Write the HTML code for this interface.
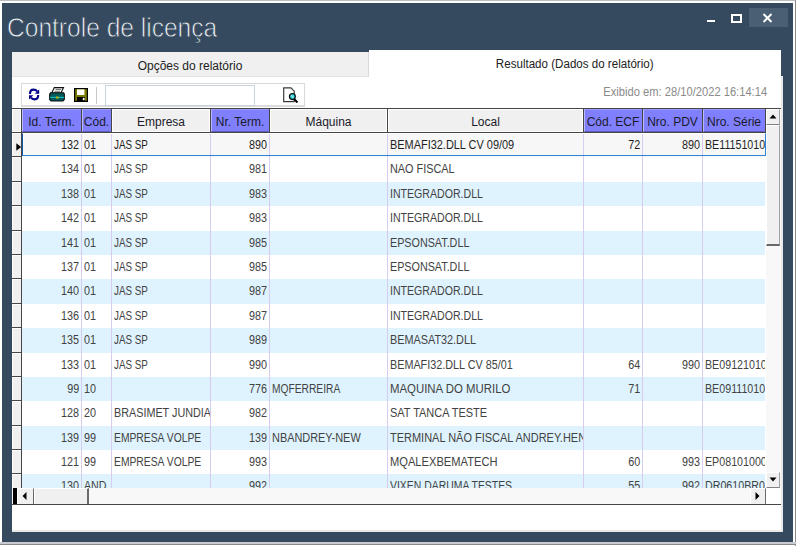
<!DOCTYPE html>
<html><head><meta charset="utf-8"><style>
*{box-sizing:border-box;margin:0;padding:0}
html,body{width:796px;height:546px;overflow:hidden;background:#fff;font-family:"Liberation Sans",sans-serif}
.a{position:absolute}
.win{left:2px;top:3px;width:791px;height:539px;background:#354a5e}
.title{left:6.6px;top:12px;font-size:28px;color:#eef1f4;-webkit-text-stroke:0.8px #354a5e;white-space:nowrap;transform:scaleX(.877);transform-origin:0 0}
.t1{left:12px;top:52px;width:357px;height:25px;background:#f0f0f0;border-right:1px solid #d9d9d9;border-bottom:1px solid #e3e3e3;font-size:12px;color:#222;text-align:center;line-height:28px}
.t2{left:369px;top:50px;width:412px;height:27px;background:#fff;font-size:12px;color:#222;text-align:center;line-height:28px}
.t2 span{display:inline-block;transform:scaleX(.965)}
.sheet{left:12px;top:76px;width:771px;height:456px;background:#fff;border-right:2px solid #e9e9e9;border-bottom:2px solid #e9e9e9}
.tb{left:21px;top:83px;width:284px;height:24px;border:1px solid #dadada;border-bottom:2px solid #dcdcdc;background:#fff}
.edit{left:105px;top:85px;width:150px;height:21px;border:1px solid #c9d1da;background:#fff}
.sep{left:96px;top:87px;width:1px;height:17px;background:#c8c8c8}
.exib{left:560px;top:85px;width:207px;text-align:right;font-size:12px;color:#8a8a8a;white-space:nowrap}
.exib span{display:inline-block;transform:scaleX(.93);transform-origin:100% 0}
.hl{background:#464646}
.hc{top:109px;height:23px;font-size:12px;color:#1a1a2a;text-align:center;line-height:25px;white-space:nowrap;overflow:hidden;border:1px solid #fff;border-right-color:#fff}
.hp{background:#8080ff;border-color:#9a9aff #8080ff #5c5cb8 #b8b8ff}
.hg{background:#f0f0f0}
.c{position:absolute;top:0;height:100%;font-size:12px;white-space:nowrap;overflow:hidden}
.c span{position:absolute;top:0}
.c.r span{transform-origin:100% 50%}
.c.l span{transform-origin:0 50%}
.vl{background:#d6ccf0;width:1px}
.btn{background:#f0f0f0;border-top:1px solid #fff;border-left:1px solid #fff;border-right:1px solid #a0a0a0;border-bottom:1px solid #808080}
</style></head><body>

<div class="a" style="left:0;top:0;width:796px;height:1px;background:#b9bdc2"></div>
<div class="a" style="left:795px;top:0;width:1px;height:546px;background:#8a8a8a"></div>
<div class="a" style="left:0;top:542px;width:796px;height:2px;background:#c9cdd1"></div>
<div class="a" style="left:0;top:544px;width:796px;height:1px;background:#8a8a8a"></div>
<div class="a win"></div>
<div class="a" style="left:749px;top:8px;width:39px;height:19px;background:#4b5f74"></div>
<div class="a" style="left:707px;top:20px;width:8px;height:2px;background:#fff"></div>
<div class="a" style="left:731px;top:14px;width:11px;height:9px;border:2px solid #fff"></div>
<svg class="a" style="left:762px;top:13px" width="11" height="10" viewBox="0 0 11 10"><path d="M1.5 1 L9.5 9 M9.5 1 L1.5 9" stroke="#fff" stroke-width="1.9" fill="none"/></svg>
<div class="a title">Controle de licença</div>
<div class="a sheet"></div>
<div class="a t1">Opções do relatório</div>
<div class="a t2"><span>Resultado (Dados do relatório)</span></div>
<div class="a tb"></div>
<div class="a sep"></div>
<div class="a edit"></div>
<svg class="a" style="left:28px;top:88px" width="12" height="13" viewBox="0 0 12 13">
<path d="M2 5.9 C2 3 3 1.6 5.6 1.6 C7.4 1.6 8.4 2.2 9.2 3.3" stroke="#000088" stroke-width="2.1" fill="none"/>
<path d="M6.8 5.8 L11.2 5.8 L11.2 1.4 Z" fill="#000088"/>
<path d="M10.2 7.1 C10.2 10 9.2 11.4 6.6 11.4 C4.8 11.4 3.8 10.8 3 9.7" stroke="#000088" stroke-width="2.1" fill="none"/>
<path d="M5.4 7.2 L1 7.2 L1 11.6 Z" fill="#000088"/>
</svg>
<svg class="a" style="left:49px;top:87px" width="16" height="15" viewBox="0 0 16 15">
<path d="M5.3 0.6 L14.5 0.6 L11.8 6.2 L2.6 6.2 Z" fill="#fff" stroke="#111" stroke-width="1.1"/>
<path d="M6.5 2.4 L12 2.4 M5.5 4.2 L11 4.2" stroke="#777" stroke-width="1.1"/>
<path d="M1.6 5.8 L14.6 5.8 L15.3 7 L15.3 12.6 L14 14 L2 14 L0.7 12.6 L0.7 7 Z" fill="#005a5a" stroke="#0a0a0a" stroke-width="1.1"/>
<path d="M1.2 10.4 L15 10.4" stroke="#19c0c0" stroke-width="1.1"/>
<rect x="7" y="9.5" width="2.6" height="2" fill="#c8b400"/>
</svg>
<svg class="a" style="left:74px;top:88px" width="14" height="14" viewBox="0 0 14 14">
<rect x="0.6" y="0.6" width="12.8" height="12.8" fill="#7a7a00" stroke="#000" stroke-width="1.2"/>
<rect x="3" y="1.4" width="7.4" height="5.6" fill="#fff"/>
<rect x="3" y="9" width="8" height="4" fill="#000"/>
<rect x="8.8" y="9.8" width="1.8" height="2.4" fill="#fff"/>
</svg>
<svg class="a" style="left:283px;top:87px" width="16" height="16" viewBox="0 0 16 16">
<path d="M0.7 0.9 L8 0.9 L11.2 4.2 L11.2 14.7 L0.7 14.7 Z" fill="#fff" stroke="#3a3a3a" stroke-width="1.2"/>
<circle cx="9.4" cy="9.6" r="2.9" fill="#22e6ee" stroke="#111" stroke-width="1.3"/>
<path d="M8.2 8 L10.2 10.8" stroke="#f0d0d0" stroke-width="0.9"/>
<path d="M11.3 12.3 L14.5 15.5" stroke="#000" stroke-width="2"/>
</svg>
<div class="a exib"><span>Exibido em: 28/10/2022 16:14:14</span></div>
<div class="a hl" style="left:12px;top:108px;width:769px;height:1px"></div>
<div class="a hc hg" style="left:12px;width:9px"></div>
<div class="a hc hp" style="left:22px;width:59px">Id. Term.</div>
<div class="a hc hp" style="left:82px;width:29px">Cód.</div>
<div class="a hc hg" style="left:112px;width:98px">Empresa</div>
<div class="a hc hp" style="left:211px;width:58px">Nr. Term.</div>
<div class="a hc hg" style="left:270px;width:117px">Máquina</div>
<div class="a hc hg" style="left:388px;width:195px">Local</div>
<div class="a hc hp" style="left:584px;width:58px">Cód. ECF</div>
<div class="a hc hp" style="left:643px;width:59px">Nro. PDV</div>
<div class="a hc hp" style="left:703px;width:62px">Nro. Série</div>
<div class="a hl" style="left:21px;top:108px;width:1px;height:25px"></div>
<div class="a hl" style="left:81px;top:108px;width:1px;height:25px"></div>
<div class="a hl" style="left:111px;top:108px;width:1px;height:25px"></div>
<div class="a hl" style="left:210px;top:108px;width:1px;height:25px"></div>
<div class="a hl" style="left:269px;top:108px;width:1px;height:25px"></div>
<div class="a hl" style="left:387px;top:108px;width:1px;height:25px"></div>
<div class="a hl" style="left:583px;top:108px;width:1px;height:25px"></div>
<div class="a hl" style="left:642px;top:108px;width:1px;height:25px"></div>
<div class="a hl" style="left:702px;top:108px;width:1px;height:25px"></div>
<div class="a hl" style="left:765px;top:108px;width:1px;height:25px"></div>
<div class="a hl" style="left:12px;top:132px;width:754px;height:1px"></div>
<div class="a" style="left:12px;top:133px;width:754px;height:355px;overflow:hidden">
<div class="a" style="left:0;top:0px;width:9px;height:23px;background:#f0f0f0;border-top:1px solid #fff;border-left:1px solid #fff"></div>
<div class="a hl" style="left:0;top:23px;width:10px;height:1px"></div>
<div class="a" style="left:10px;top:0px;width:743px;height:24px;background:#f7f7f7">
<div class="c r" style="left:0px;width:59px;line-height:24px;color:#1e1e1e"><span style="right:1.6px;transform:scaleX(0.9)">132</span></div>
<div class="c l" style="left:60px;width:29px;line-height:24px;color:#1e1e1e"><span style="left:1.6px;transform:scaleX(0.9)">01</span></div>
<div class="c l" style="left:90px;width:98px;line-height:24px;color:#1e1e1e"><span style="left:1.6px;transform:scaleX(0.82)">JAS SP</span></div>
<div class="c r" style="left:189px;width:58px;line-height:24px;color:#1e1e1e"><span style="right:1.6px;transform:scaleX(0.9)">890</span></div>
<div class="c l" style="left:366px;width:195px;line-height:24px;color:#1e1e1e"><span style="left:1.6px;transform:scaleX(0.911)">BEMAFI32.DLL CV 09/09</span></div>
<div class="c r" style="left:562px;width:58px;line-height:24px;color:#1e1e1e"><span style="right:1.6px;transform:scaleX(0.9)">72</span></div>
<div class="c r" style="left:621px;width:59px;line-height:24px;color:#1e1e1e"><span style="right:1.6px;transform:scaleX(0.9)">890</span></div>
<div class="c l" style="left:681px;width:62px;line-height:24px;color:#1e1e1e"><span style="left:1.6px;transform:scaleX(0.89)">BE11151010</span></div>
<div class="a vl" style="left:59px;top:0;height:24px"></div>
<div class="a vl" style="left:89px;top:0;height:24px"></div>
<div class="a vl" style="left:188px;top:0;height:24px"></div>
<div class="a vl" style="left:247px;top:0;height:24px"></div>
<div class="a vl" style="left:365px;top:0;height:24px"></div>
<div class="a vl" style="left:561px;top:0;height:24px"></div>
<div class="a vl" style="left:620px;top:0;height:24px"></div>
<div class="a vl" style="left:680px;top:0;height:24px"></div>
</div>
<div class="a" style="left:0;top:24px;width:9px;height:24px;background:#f0f0f0;border-top:1px solid #fff;border-left:1px solid #fff"></div>
<div class="a hl" style="left:0;top:48px;width:10px;height:1px"></div>
<div class="a" style="left:10px;top:24px;width:743px;height:25px;background:#ffffff">
<div class="c r" style="left:0px;width:59px;line-height:25px;color:#424242"><span style="right:1.6px;transform:scaleX(0.9)">134</span></div>
<div class="c l" style="left:60px;width:29px;line-height:25px;color:#424242"><span style="left:1.6px;transform:scaleX(0.9)">01</span></div>
<div class="c l" style="left:90px;width:98px;line-height:25px;color:#424242"><span style="left:1.6px;transform:scaleX(0.82)">JAS SP</span></div>
<div class="c r" style="left:189px;width:58px;line-height:25px;color:#424242"><span style="right:1.6px;transform:scaleX(0.9)">981</span></div>
<div class="c l" style="left:366px;width:195px;line-height:25px;color:#424242"><span style="left:1.6px;transform:scaleX(0.906)">NAO FISCAL</span></div>
<div class="a vl" style="left:59px;top:0;height:25px"></div>
<div class="a vl" style="left:89px;top:0;height:25px"></div>
<div class="a vl" style="left:188px;top:0;height:25px"></div>
<div class="a vl" style="left:247px;top:0;height:25px"></div>
<div class="a vl" style="left:365px;top:0;height:25px"></div>
<div class="a vl" style="left:561px;top:0;height:25px"></div>
<div class="a vl" style="left:620px;top:0;height:25px"></div>
<div class="a vl" style="left:680px;top:0;height:25px"></div>
</div>
<div class="a" style="left:0;top:49px;width:9px;height:23px;background:#f0f0f0;border-top:1px solid #fff;border-left:1px solid #fff"></div>
<div class="a hl" style="left:0;top:72px;width:10px;height:1px"></div>
<div class="a" style="left:10px;top:49px;width:743px;height:24px;background:#dff3fe">
<div class="c r" style="left:0px;width:59px;line-height:24px;color:#424242"><span style="right:1.6px;transform:scaleX(0.9)">138</span></div>
<div class="c l" style="left:60px;width:29px;line-height:24px;color:#424242"><span style="left:1.6px;transform:scaleX(0.9)">01</span></div>
<div class="c l" style="left:90px;width:98px;line-height:24px;color:#424242"><span style="left:1.6px;transform:scaleX(0.82)">JAS SP</span></div>
<div class="c r" style="left:189px;width:58px;line-height:24px;color:#424242"><span style="right:1.6px;transform:scaleX(0.9)">983</span></div>
<div class="c l" style="left:366px;width:195px;line-height:24px;color:#424242"><span style="left:1.6px;transform:scaleX(0.882)">INTEGRADOR.DLL</span></div>
<div class="a vl" style="left:59px;top:0;height:24px"></div>
<div class="a vl" style="left:89px;top:0;height:24px"></div>
<div class="a vl" style="left:188px;top:0;height:24px"></div>
<div class="a vl" style="left:247px;top:0;height:24px"></div>
<div class="a vl" style="left:365px;top:0;height:24px"></div>
<div class="a vl" style="left:561px;top:0;height:24px"></div>
<div class="a vl" style="left:620px;top:0;height:24px"></div>
<div class="a vl" style="left:680px;top:0;height:24px"></div>
</div>
<div class="a" style="left:0;top:73px;width:9px;height:24px;background:#f0f0f0;border-top:1px solid #fff;border-left:1px solid #fff"></div>
<div class="a hl" style="left:0;top:97px;width:10px;height:1px"></div>
<div class="a" style="left:10px;top:73px;width:743px;height:25px;background:#ffffff">
<div class="c r" style="left:0px;width:59px;line-height:25px;color:#424242"><span style="right:1.6px;transform:scaleX(0.9)">142</span></div>
<div class="c l" style="left:60px;width:29px;line-height:25px;color:#424242"><span style="left:1.6px;transform:scaleX(0.9)">01</span></div>
<div class="c l" style="left:90px;width:98px;line-height:25px;color:#424242"><span style="left:1.6px;transform:scaleX(0.82)">JAS SP</span></div>
<div class="c r" style="left:189px;width:58px;line-height:25px;color:#424242"><span style="right:1.6px;transform:scaleX(0.9)">983</span></div>
<div class="c l" style="left:366px;width:195px;line-height:25px;color:#424242"><span style="left:1.6px;transform:scaleX(0.882)">INTEGRADOR.DLL</span></div>
<div class="a vl" style="left:59px;top:0;height:25px"></div>
<div class="a vl" style="left:89px;top:0;height:25px"></div>
<div class="a vl" style="left:188px;top:0;height:25px"></div>
<div class="a vl" style="left:247px;top:0;height:25px"></div>
<div class="a vl" style="left:365px;top:0;height:25px"></div>
<div class="a vl" style="left:561px;top:0;height:25px"></div>
<div class="a vl" style="left:620px;top:0;height:25px"></div>
<div class="a vl" style="left:680px;top:0;height:25px"></div>
</div>
<div class="a" style="left:0;top:98px;width:9px;height:23px;background:#f0f0f0;border-top:1px solid #fff;border-left:1px solid #fff"></div>
<div class="a hl" style="left:0;top:121px;width:10px;height:1px"></div>
<div class="a" style="left:10px;top:98px;width:743px;height:24px;background:#dff3fe">
<div class="c r" style="left:0px;width:59px;line-height:24px;color:#424242"><span style="right:1.6px;transform:scaleX(0.9)">141</span></div>
<div class="c l" style="left:60px;width:29px;line-height:24px;color:#424242"><span style="left:1.6px;transform:scaleX(0.9)">01</span></div>
<div class="c l" style="left:90px;width:98px;line-height:24px;color:#424242"><span style="left:1.6px;transform:scaleX(0.82)">JAS SP</span></div>
<div class="c r" style="left:189px;width:58px;line-height:24px;color:#424242"><span style="right:1.6px;transform:scaleX(0.9)">985</span></div>
<div class="c l" style="left:366px;width:195px;line-height:24px;color:#424242"><span style="left:1.6px;transform:scaleX(0.897)">EPSONSAT.DLL</span></div>
<div class="a vl" style="left:59px;top:0;height:24px"></div>
<div class="a vl" style="left:89px;top:0;height:24px"></div>
<div class="a vl" style="left:188px;top:0;height:24px"></div>
<div class="a vl" style="left:247px;top:0;height:24px"></div>
<div class="a vl" style="left:365px;top:0;height:24px"></div>
<div class="a vl" style="left:561px;top:0;height:24px"></div>
<div class="a vl" style="left:620px;top:0;height:24px"></div>
<div class="a vl" style="left:680px;top:0;height:24px"></div>
</div>
<div class="a" style="left:0;top:122px;width:9px;height:23px;background:#f0f0f0;border-top:1px solid #fff;border-left:1px solid #fff"></div>
<div class="a hl" style="left:0;top:145px;width:10px;height:1px"></div>
<div class="a" style="left:10px;top:122px;width:743px;height:24px;background:#ffffff">
<div class="c r" style="left:0px;width:59px;line-height:24px;color:#424242"><span style="right:1.6px;transform:scaleX(0.9)">137</span></div>
<div class="c l" style="left:60px;width:29px;line-height:24px;color:#424242"><span style="left:1.6px;transform:scaleX(0.9)">01</span></div>
<div class="c l" style="left:90px;width:98px;line-height:24px;color:#424242"><span style="left:1.6px;transform:scaleX(0.82)">JAS SP</span></div>
<div class="c r" style="left:189px;width:58px;line-height:24px;color:#424242"><span style="right:1.6px;transform:scaleX(0.9)">985</span></div>
<div class="c l" style="left:366px;width:195px;line-height:24px;color:#424242"><span style="left:1.6px;transform:scaleX(0.897)">EPSONSAT.DLL</span></div>
<div class="a vl" style="left:59px;top:0;height:24px"></div>
<div class="a vl" style="left:89px;top:0;height:24px"></div>
<div class="a vl" style="left:188px;top:0;height:24px"></div>
<div class="a vl" style="left:247px;top:0;height:24px"></div>
<div class="a vl" style="left:365px;top:0;height:24px"></div>
<div class="a vl" style="left:561px;top:0;height:24px"></div>
<div class="a vl" style="left:620px;top:0;height:24px"></div>
<div class="a vl" style="left:680px;top:0;height:24px"></div>
</div>
<div class="a" style="left:0;top:146px;width:9px;height:24px;background:#f0f0f0;border-top:1px solid #fff;border-left:1px solid #fff"></div>
<div class="a hl" style="left:0;top:170px;width:10px;height:1px"></div>
<div class="a" style="left:10px;top:146px;width:743px;height:25px;background:#dff3fe">
<div class="c r" style="left:0px;width:59px;line-height:25px;color:#424242"><span style="right:1.6px;transform:scaleX(0.9)">140</span></div>
<div class="c l" style="left:60px;width:29px;line-height:25px;color:#424242"><span style="left:1.6px;transform:scaleX(0.9)">01</span></div>
<div class="c l" style="left:90px;width:98px;line-height:25px;color:#424242"><span style="left:1.6px;transform:scaleX(0.82)">JAS SP</span></div>
<div class="c r" style="left:189px;width:58px;line-height:25px;color:#424242"><span style="right:1.6px;transform:scaleX(0.9)">987</span></div>
<div class="c l" style="left:366px;width:195px;line-height:25px;color:#424242"><span style="left:1.6px;transform:scaleX(0.882)">INTEGRADOR.DLL</span></div>
<div class="a vl" style="left:59px;top:0;height:25px"></div>
<div class="a vl" style="left:89px;top:0;height:25px"></div>
<div class="a vl" style="left:188px;top:0;height:25px"></div>
<div class="a vl" style="left:247px;top:0;height:25px"></div>
<div class="a vl" style="left:365px;top:0;height:25px"></div>
<div class="a vl" style="left:561px;top:0;height:25px"></div>
<div class="a vl" style="left:620px;top:0;height:25px"></div>
<div class="a vl" style="left:680px;top:0;height:25px"></div>
</div>
<div class="a" style="left:0;top:171px;width:9px;height:23px;background:#f0f0f0;border-top:1px solid #fff;border-left:1px solid #fff"></div>
<div class="a hl" style="left:0;top:194px;width:10px;height:1px"></div>
<div class="a" style="left:10px;top:171px;width:743px;height:24px;background:#ffffff">
<div class="c r" style="left:0px;width:59px;line-height:24px;color:#424242"><span style="right:1.6px;transform:scaleX(0.9)">136</span></div>
<div class="c l" style="left:60px;width:29px;line-height:24px;color:#424242"><span style="left:1.6px;transform:scaleX(0.9)">01</span></div>
<div class="c l" style="left:90px;width:98px;line-height:24px;color:#424242"><span style="left:1.6px;transform:scaleX(0.82)">JAS SP</span></div>
<div class="c r" style="left:189px;width:58px;line-height:24px;color:#424242"><span style="right:1.6px;transform:scaleX(0.9)">987</span></div>
<div class="c l" style="left:366px;width:195px;line-height:24px;color:#424242"><span style="left:1.6px;transform:scaleX(0.882)">INTEGRADOR.DLL</span></div>
<div class="a vl" style="left:59px;top:0;height:24px"></div>
<div class="a vl" style="left:89px;top:0;height:24px"></div>
<div class="a vl" style="left:188px;top:0;height:24px"></div>
<div class="a vl" style="left:247px;top:0;height:24px"></div>
<div class="a vl" style="left:365px;top:0;height:24px"></div>
<div class="a vl" style="left:561px;top:0;height:24px"></div>
<div class="a vl" style="left:620px;top:0;height:24px"></div>
<div class="a vl" style="left:680px;top:0;height:24px"></div>
</div>
<div class="a" style="left:0;top:195px;width:9px;height:24px;background:#f0f0f0;border-top:1px solid #fff;border-left:1px solid #fff"></div>
<div class="a hl" style="left:0;top:219px;width:10px;height:1px"></div>
<div class="a" style="left:10px;top:195px;width:743px;height:25px;background:#dff3fe">
<div class="c r" style="left:0px;width:59px;line-height:25px;color:#424242"><span style="right:1.6px;transform:scaleX(0.9)">135</span></div>
<div class="c l" style="left:60px;width:29px;line-height:25px;color:#424242"><span style="left:1.6px;transform:scaleX(0.9)">01</span></div>
<div class="c l" style="left:90px;width:98px;line-height:25px;color:#424242"><span style="left:1.6px;transform:scaleX(0.82)">JAS SP</span></div>
<div class="c r" style="left:189px;width:58px;line-height:25px;color:#424242"><span style="right:1.6px;transform:scaleX(0.9)">989</span></div>
<div class="c l" style="left:366px;width:195px;line-height:25px;color:#424242"><span style="left:1.6px;transform:scaleX(0.904)">BEMASAT32.DLL</span></div>
<div class="a vl" style="left:59px;top:0;height:25px"></div>
<div class="a vl" style="left:89px;top:0;height:25px"></div>
<div class="a vl" style="left:188px;top:0;height:25px"></div>
<div class="a vl" style="left:247px;top:0;height:25px"></div>
<div class="a vl" style="left:365px;top:0;height:25px"></div>
<div class="a vl" style="left:561px;top:0;height:25px"></div>
<div class="a vl" style="left:620px;top:0;height:25px"></div>
<div class="a vl" style="left:680px;top:0;height:25px"></div>
</div>
<div class="a" style="left:0;top:220px;width:9px;height:23px;background:#f0f0f0;border-top:1px solid #fff;border-left:1px solid #fff"></div>
<div class="a hl" style="left:0;top:243px;width:10px;height:1px"></div>
<div class="a" style="left:10px;top:220px;width:743px;height:24px;background:#ffffff">
<div class="c r" style="left:0px;width:59px;line-height:24px;color:#424242"><span style="right:1.6px;transform:scaleX(0.9)">133</span></div>
<div class="c l" style="left:60px;width:29px;line-height:24px;color:#424242"><span style="left:1.6px;transform:scaleX(0.9)">01</span></div>
<div class="c l" style="left:90px;width:98px;line-height:24px;color:#424242"><span style="left:1.6px;transform:scaleX(0.82)">JAS SP</span></div>
<div class="c r" style="left:189px;width:58px;line-height:24px;color:#424242"><span style="right:1.6px;transform:scaleX(0.9)">990</span></div>
<div class="c l" style="left:366px;width:195px;line-height:24px;color:#424242"><span style="left:1.6px;transform:scaleX(0.9)">BEMAFI32.DLL CV 85/01</span></div>
<div class="c r" style="left:562px;width:58px;line-height:24px;color:#424242"><span style="right:1.6px;transform:scaleX(0.9)">64</span></div>
<div class="c r" style="left:621px;width:59px;line-height:24px;color:#424242"><span style="right:1.6px;transform:scaleX(0.9)">990</span></div>
<div class="c l" style="left:681px;width:62px;line-height:24px;color:#424242"><span style="left:1.6px;transform:scaleX(0.89)">BE09121010</span></div>
<div class="a vl" style="left:59px;top:0;height:24px"></div>
<div class="a vl" style="left:89px;top:0;height:24px"></div>
<div class="a vl" style="left:188px;top:0;height:24px"></div>
<div class="a vl" style="left:247px;top:0;height:24px"></div>
<div class="a vl" style="left:365px;top:0;height:24px"></div>
<div class="a vl" style="left:561px;top:0;height:24px"></div>
<div class="a vl" style="left:620px;top:0;height:24px"></div>
<div class="a vl" style="left:680px;top:0;height:24px"></div>
</div>
<div class="a" style="left:0;top:244px;width:9px;height:23px;background:#f0f0f0;border-top:1px solid #fff;border-left:1px solid #fff"></div>
<div class="a hl" style="left:0;top:267px;width:10px;height:1px"></div>
<div class="a" style="left:10px;top:244px;width:743px;height:24px;background:#dff3fe">
<div class="c r" style="left:0px;width:59px;line-height:24px;color:#424242"><span style="right:1.6px;transform:scaleX(0.9)">99</span></div>
<div class="c l" style="left:60px;width:29px;line-height:24px;color:#424242"><span style="left:1.6px;transform:scaleX(0.9)">10</span></div>
<div class="c r" style="left:189px;width:58px;line-height:24px;color:#424242"><span style="right:1.6px;transform:scaleX(0.9)">776</span></div>
<div class="c l" style="left:248px;width:117px;line-height:24px;color:#424242"><span style="left:1.6px;transform:scaleX(0.853)">MQFERREIRA</span></div>
<div class="c l" style="left:366px;width:195px;line-height:24px;color:#424242"><span style="left:1.6px;transform:scaleX(0.95)">MAQUINA DO MURILO</span></div>
<div class="c r" style="left:562px;width:58px;line-height:24px;color:#424242"><span style="right:1.6px;transform:scaleX(0.9)">71</span></div>
<div class="c l" style="left:681px;width:62px;line-height:24px;color:#424242"><span style="left:1.6px;transform:scaleX(0.89)">BE09111010</span></div>
<div class="a vl" style="left:59px;top:0;height:24px"></div>
<div class="a vl" style="left:89px;top:0;height:24px"></div>
<div class="a vl" style="left:188px;top:0;height:24px"></div>
<div class="a vl" style="left:247px;top:0;height:24px"></div>
<div class="a vl" style="left:365px;top:0;height:24px"></div>
<div class="a vl" style="left:561px;top:0;height:24px"></div>
<div class="a vl" style="left:620px;top:0;height:24px"></div>
<div class="a vl" style="left:680px;top:0;height:24px"></div>
</div>
<div class="a" style="left:0;top:268px;width:9px;height:24px;background:#f0f0f0;border-top:1px solid #fff;border-left:1px solid #fff"></div>
<div class="a hl" style="left:0;top:292px;width:10px;height:1px"></div>
<div class="a" style="left:10px;top:268px;width:743px;height:25px;background:#ffffff">
<div class="c r" style="left:0px;width:59px;line-height:25px;color:#424242"><span style="right:1.6px;transform:scaleX(0.9)">128</span></div>
<div class="c l" style="left:60px;width:29px;line-height:25px;color:#424242"><span style="left:1.6px;transform:scaleX(0.9)">20</span></div>
<div class="c l" style="left:90px;width:98px;line-height:25px;color:#424242"><span style="left:1.6px;transform:scaleX(0.9)">BRASIMET JUNDIAI</span></div>
<div class="c r" style="left:189px;width:58px;line-height:25px;color:#424242"><span style="right:1.6px;transform:scaleX(0.9)">982</span></div>
<div class="c l" style="left:366px;width:195px;line-height:25px;color:#424242"><span style="left:1.6px;transform:scaleX(0.914)">SAT TANCA TESTE</span></div>
<div class="a vl" style="left:59px;top:0;height:25px"></div>
<div class="a vl" style="left:89px;top:0;height:25px"></div>
<div class="a vl" style="left:188px;top:0;height:25px"></div>
<div class="a vl" style="left:247px;top:0;height:25px"></div>
<div class="a vl" style="left:365px;top:0;height:25px"></div>
<div class="a vl" style="left:561px;top:0;height:25px"></div>
<div class="a vl" style="left:620px;top:0;height:25px"></div>
<div class="a vl" style="left:680px;top:0;height:25px"></div>
</div>
<div class="a" style="left:0;top:293px;width:9px;height:23px;background:#f0f0f0;border-top:1px solid #fff;border-left:1px solid #fff"></div>
<div class="a hl" style="left:0;top:316px;width:10px;height:1px"></div>
<div class="a" style="left:10px;top:293px;width:743px;height:24px;background:#dff3fe">
<div class="c r" style="left:0px;width:59px;line-height:24px;color:#424242"><span style="right:1.6px;transform:scaleX(0.9)">139</span></div>
<div class="c l" style="left:60px;width:29px;line-height:24px;color:#424242"><span style="left:1.6px;transform:scaleX(0.9)">99</span></div>
<div class="c l" style="left:90px;width:98px;line-height:24px;color:#424242"><span style="left:1.6px;transform:scaleX(0.86)">EMPRESA VOLPE</span></div>
<div class="c r" style="left:189px;width:58px;line-height:24px;color:#424242"><span style="right:1.6px;transform:scaleX(0.9)">139</span></div>
<div class="c l" style="left:248px;width:117px;line-height:24px;color:#424242"><span style="left:1.6px;transform:scaleX(0.909)">NBANDREY-NEW</span></div>
<div class="c l" style="left:366px;width:195px;line-height:24px;color:#424242"><span style="left:1.6px;transform:scaleX(0.915)">TERMINAL NÃO FISCAL ANDREY.HENRIQUE</span></div>
<div class="a vl" style="left:59px;top:0;height:24px"></div>
<div class="a vl" style="left:89px;top:0;height:24px"></div>
<div class="a vl" style="left:188px;top:0;height:24px"></div>
<div class="a vl" style="left:247px;top:0;height:24px"></div>
<div class="a vl" style="left:365px;top:0;height:24px"></div>
<div class="a vl" style="left:561px;top:0;height:24px"></div>
<div class="a vl" style="left:620px;top:0;height:24px"></div>
<div class="a vl" style="left:680px;top:0;height:24px"></div>
</div>
<div class="a" style="left:0;top:317px;width:9px;height:23px;background:#f0f0f0;border-top:1px solid #fff;border-left:1px solid #fff"></div>
<div class="a hl" style="left:0;top:340px;width:10px;height:1px"></div>
<div class="a" style="left:10px;top:317px;width:743px;height:24px;background:#ffffff">
<div class="c r" style="left:0px;width:59px;line-height:24px;color:#424242"><span style="right:1.6px;transform:scaleX(0.9)">121</span></div>
<div class="c l" style="left:60px;width:29px;line-height:24px;color:#424242"><span style="left:1.6px;transform:scaleX(0.9)">99</span></div>
<div class="c l" style="left:90px;width:98px;line-height:24px;color:#424242"><span style="left:1.6px;transform:scaleX(0.86)">EMPRESA VOLPE</span></div>
<div class="c r" style="left:189px;width:58px;line-height:24px;color:#424242"><span style="right:1.6px;transform:scaleX(0.9)">993</span></div>
<div class="c l" style="left:366px;width:195px;line-height:24px;color:#424242"><span style="left:1.6px;transform:scaleX(0.928)">MQALEXBEMATECH</span></div>
<div class="c r" style="left:562px;width:58px;line-height:24px;color:#424242"><span style="right:1.6px;transform:scaleX(0.9)">60</span></div>
<div class="c r" style="left:621px;width:59px;line-height:24px;color:#424242"><span style="right:1.6px;transform:scaleX(0.9)">993</span></div>
<div class="c l" style="left:681px;width:62px;line-height:24px;color:#424242"><span style="left:1.6px;transform:scaleX(0.89)">EP08101000</span></div>
<div class="a vl" style="left:59px;top:0;height:24px"></div>
<div class="a vl" style="left:89px;top:0;height:24px"></div>
<div class="a vl" style="left:188px;top:0;height:24px"></div>
<div class="a vl" style="left:247px;top:0;height:24px"></div>
<div class="a vl" style="left:365px;top:0;height:24px"></div>
<div class="a vl" style="left:561px;top:0;height:24px"></div>
<div class="a vl" style="left:620px;top:0;height:24px"></div>
<div class="a vl" style="left:680px;top:0;height:24px"></div>
</div>
<div class="a" style="left:0;top:341px;width:9px;height:24px;background:#f0f0f0;border-top:1px solid #fff;border-left:1px solid #fff"></div>
<div class="a hl" style="left:0;top:365px;width:10px;height:1px"></div>
<div class="a" style="left:10px;top:341px;width:743px;height:25px;background:#dff3fe">
<div class="c r" style="left:0px;width:59px;line-height:25px;color:#424242"><span style="right:1.6px;transform:scaleX(0.9)">130</span></div>
<div class="c l" style="left:60px;width:29px;line-height:25px;color:#424242"><span style="left:1.6px;transform:scaleX(0.89)">AND</span></div>
<div class="c r" style="left:189px;width:58px;line-height:25px;color:#424242"><span style="right:1.6px;transform:scaleX(0.9)">992</span></div>
<div class="c l" style="left:366px;width:195px;line-height:25px;color:#424242"><span style="left:1.6px;transform:scaleX(0.869)">VIXEN DARUMA TESTES</span></div>
<div class="c r" style="left:562px;width:58px;line-height:25px;color:#424242"><span style="right:1.6px;transform:scaleX(0.9)">55</span></div>
<div class="c r" style="left:621px;width:59px;line-height:25px;color:#424242"><span style="right:1.6px;transform:scaleX(0.9)">992</span></div>
<div class="c l" style="left:681px;width:62px;line-height:25px;color:#424242"><span style="left:1.6px;transform:scaleX(0.89)">DR0610BR00</span></div>
<div class="a vl" style="left:59px;top:0;height:25px"></div>
<div class="a vl" style="left:89px;top:0;height:25px"></div>
<div class="a vl" style="left:188px;top:0;height:25px"></div>
<div class="a vl" style="left:247px;top:0;height:25px"></div>
<div class="a vl" style="left:365px;top:0;height:25px"></div>
<div class="a vl" style="left:561px;top:0;height:25px"></div>
<div class="a vl" style="left:620px;top:0;height:25px"></div>
<div class="a vl" style="left:680px;top:0;height:25px"></div>
</div>
<div class="a" style="left:10px;top:0;width:744px;height:23px;border:1px solid #2f86d8;border-top:1px solid #fff;border-left:1px solid #0f5aa8"></div>
<svg class="a" style="left:4px;top:10px" width="6" height="8" viewBox="0 0 6 8"><path d="M0.3 0.3 L5.2 4 L0.3 7.7 Z" fill="#000"/></svg>
</div>
<div class="a hl" style="left:21px;top:133px;width:1px;height:355px"></div>
<div class="a" style="left:766px;top:109px;width:15px;height:379px;background:#f8f8f8"></div>
<div class="a btn" style="left:766px;top:109px;width:14px;height:16px"></div>
<svg class="a" style="left:769px;top:114px" width="8" height="5" viewBox="0 0 8 5"><path d="M0.5 4.5 L4 0.5 L7.5 4.5 Z" fill="#000"/></svg>
<div class="a btn" style="left:766px;top:125px;width:14px;height:121px;border-bottom:2px solid #696969"></div>
<div class="a btn" style="left:766px;top:472px;width:14px;height:16px"></div>
<svg class="a" style="left:769px;top:477px" width="8" height="5" viewBox="0 0 8 5"><path d="M0.5 0.5 L4 4.5 L7.5 0.5 Z" fill="#000"/></svg>
<div class="a" style="left:12px;top:488px;width:754px;height:16px;background:#f8f8f8"></div>
<div class="a" style="left:13px;top:488px;width:4px;height:16px;background:#000"></div>
<div class="a" style="left:17px;top:488px;width:17px;height:16px;background:#f0f0f0;border-top:1px solid #fff;border-left:1px solid #fff;border-right:1px solid #696969"></div>
<svg class="a" style="left:22px;top:492px" width="5" height="8" viewBox="0 0 5 8"><path d="M4.5 0 L0.5 4 L4.5 8 Z" fill="#000"/></svg>
<div class="a" style="left:34px;top:488px;width:55px;height:16px;background:#f0f0f0;border-top:1px solid #fff;border-left:1px solid #fff;border-right:2px solid #696969"></div>
<div class="a" style="left:750px;top:488px;width:16px;height:16px;background:#f0f0f0;border-top:1px solid #fff;border-left:1px solid #fff;border-right:1px solid #696969"></div>
<svg class="a" style="left:755px;top:492px" width="5" height="8" viewBox="0 0 5 8"><path d="M0.5 0 L4.5 4 L0.5 8 Z" fill="#000"/></svg>
<div class="a" style="left:766px;top:488px;width:15px;height:16px;background:#fff"></div>
<div class="a hl" style="left:12px;top:504px;width:769px;height:1px"></div>
</body></html>
